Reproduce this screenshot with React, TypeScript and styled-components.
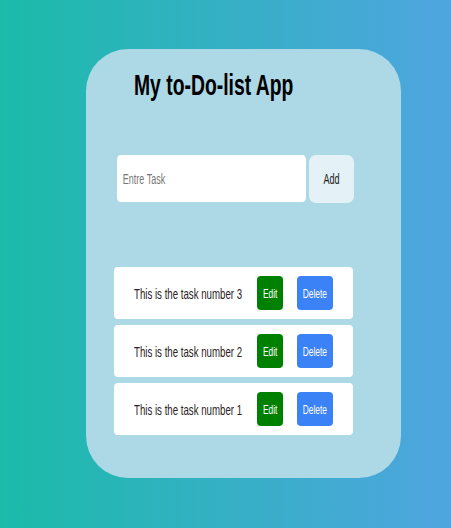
import * as React from 'react';
import styled, { createGlobalStyle } from 'styled-components';

const GlobalStyle = createGlobalStyle`
    html, body {
        margin: 0;
        padding: 0;
    }
    body {
        font-family: "Liberation Sans", Arial, sans-serif;
    }
`;

const Page = styled.div`
    min-height: 528px;
    box-sizing: border-box;
    padding: 49px 0 0 86px;
    background: linear-gradient(to right, #1bbba9, #4fa5e0);
`;

const Card = styled.div`
    width: 315px;
    height: 429px;
    box-sizing: border-box;
    border-radius: 42px;
    background: #add8e6;
    display: flex;
    flex-direction: column;
`;

// the whole shot is squeezed sideways, so text is narrowed to match
const Narrow = styled.span<{ $origin?: string }>`
    display: inline-block;
    white-space: nowrap;
    transform: scaleX(0.645);
    transform-origin: ${p => p.$origin || 'left'} center;
`;

const Title = styled.h1`
    margin: 19px 0 0 48px;
    font-size: 30px;
    line-height: 34px;
    font-weight: bold;
    color: #000;
`;

const Form = styled.div`
    display: flex;
    gap: 3px;
    margin: 53px 0 0 31px;
`;

const InputBox = styled.div`
    width: 189px;
    height: 47px;
`;

const Input = styled.input`
    width: 293px;
    height: 47px;
    box-sizing: border-box;
    border: none;
    border-radius: 5px;
    padding: 0 9px;
    font-family: "Liberation Sans", Arial, sans-serif;
    font-size: 14px;
    background: #fff;
    transform: scaleX(0.645);
    transform-origin: left center;
    outline: none;

    &::placeholder {
        color: #777;
    }
`;

const AddButton = styled.button`
    width: 45px;
    height: 48px;
    border: none;
    border-radius: 7px;
    background: #e4f1f6;
    color: #222;
    font-family: "Liberation Sans", Arial, sans-serif;
    font-size: 14px;
    padding: 0;
    display: flex;
    align-items: center;
    justify-content: center;
`;

const List = styled.div`
    display: flex;
    flex-direction: column;
    gap: 6px;
    margin: 64px 0 0 28px;
    width: 239px;
`;

const Row = styled.div`
    height: 52px;
    box-sizing: border-box;
    background: #fff;
    border-radius: 4px;
    padding-left: 20px;
    display: flex;
    align-items: center;
`;

const TaskText = styled.div`
    flex: 0 0 123px;
    min-width: 0;
    font-size: 15px;
    color: #2b2222;
`;

const ActionButton = styled.button<{ $color: string; $width: number }>`
    flex: 0 0 ${p => p.$width}px;
    min-width: 0;
    height: 34px;
    border: none;
    border-radius: 4px;
    background: ${p => p.$color};
    color: #fff;
    font-family: "Liberation Sans", Arial, sans-serif;
    font-size: 13px;
    padding: 0;
    display: flex;
    align-items: center;
    justify-content: center;
    overflow: visible;

    & + & {
        margin-left: 14px;
    }
`;

const tasks = [
    'This is the task number 3',
    'This is the task number 2',
    'This is the task number 1',
];

export default function App() {
    return (
        <>
            <GlobalStyle />
            <Page>
                <Card>
                    <Title><Narrow>My to-Do-list App</Narrow></Title>

                    <Form>
                        <InputBox>
                            <Input type="text" placeholder="Entre Task" />
                        </InputBox>
                        <AddButton><Narrow $origin="center">Add</Narrow></AddButton>
                    </Form>

                    <List>
                        {tasks.map(t => (
                            <Row key={t}>
                                <TaskText><Narrow>{t}</Narrow></TaskText>
                                <ActionButton $color="#008000" $width={26}>
                                    <Narrow $origin="center">Edit</Narrow>
                                </ActionButton>
                                <ActionButton $color="#3b82f6" $width={36}>
                                    <Narrow $origin="center">Delete</Narrow>
                                </ActionButton>
                            </Row>
                        ))}
                    </List>
                </Card>
            </Page>
        </>
    );
}
